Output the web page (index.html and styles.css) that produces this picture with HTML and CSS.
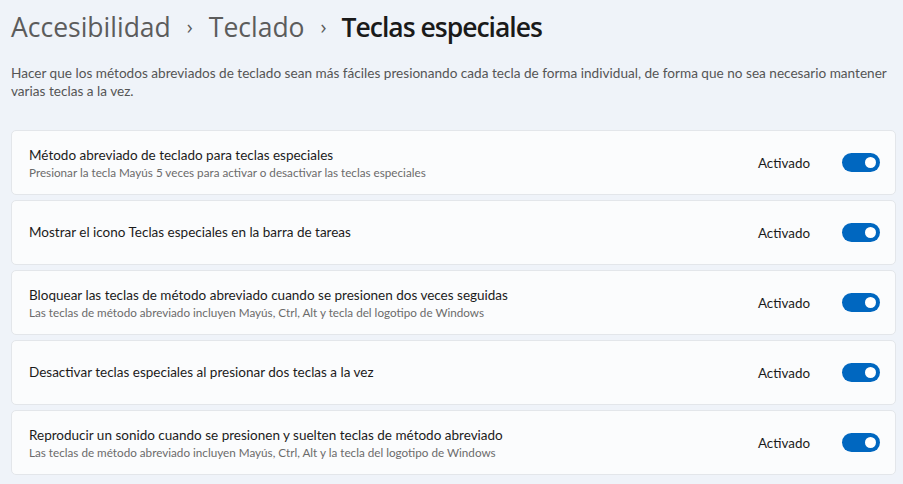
FILE: index.html
```html
<!DOCTYPE html>
<html lang="es">
<head>
    <meta charset="UTF-8">
    <title>Teclas especiales</title>
    <link rel="stylesheet" href="styles.css">
</head>
<body>

<div class="page">

    <!-- Breadcrumb -->
    <h1 class="crumbs">
        <span class="crumb">Accesibilidad</span>
        <span class="sep">&rsaquo;</span>
        <span class="crumb">Teclado</span>
        <span class="sep">&rsaquo;</span>
        <span class="crumb current">Teclas especiales</span>
    </h1>

    <p class="intro">Hacer que los métodos abreviados de teclado sean más fáciles presionando cada tecla de forma individual, de forma que no sea necesario mantener varias teclas a la vez.</p>

    <div class="list">
        <div class="card">
            <div class="text">
                <div class="title">Método abreviado de teclado para teclas especiales</div>
                <div class="sub">Presionar la tecla Mayús 5 veces para activar o desactivar las teclas especiales</div>
            </div>
            <span class="state">Activado</span>
            <span class="toggle"></span>
        </div>
        <div class="card">
            <div class="text">
                <div class="title">Mostrar el icono Teclas especiales en la barra de tareas</div>
            </div>
            <span class="state">Activado</span>
            <span class="toggle"></span>
        </div>
        <div class="card">
            <div class="text">
                <div class="title">Bloquear las teclas de método abreviado cuando se presionen dos veces seguidas</div>
                <div class="sub">Las teclas de método abreviado incluyen Mayús, Ctrl, Alt y tecla del logotipo de Windows</div>
            </div>
            <span class="state">Activado</span>
            <span class="toggle"></span>
        </div>
        <div class="card">
            <div class="text">
                <div class="title">Desactivar teclas especiales al presionar dos teclas a la vez</div>
            </div>
            <span class="state">Activado</span>
            <span class="toggle"></span>
        </div>
        <div class="card">
            <div class="text">
                <div class="title">Reproducir un sonido cuando se presionen y suelten teclas de método abreviado</div>
                <div class="sub">Las teclas de método abreviado incluyen Mayús, Ctrl, Alt y la tecla del logotipo de Windows</div>
            </div>
            <span class="state">Activado</span>
            <span class="toggle"></span>
        </div>
    </div>

</div>

</body>
</html>
```

FILE: styles.css
```css
body {
    margin: 0;
    background-color: #eff3f9;
    font-family: 'Lato', sans-serif;
    color: #1b1b1b;
}

.page {
    padding: 7px 7px 0 11px;
}

.crumbs {
    margin: 0;
    font-family: 'Open Sans', sans-serif;
    font-size: 26.5px;
    font-weight: 500;
    line-height: 40px;
    display: flex;
    align-items: center;
    gap: 16px;
}

.crumb {
    color: #5c5c5c;
}

.crumb.current {
    color: #1a1a1a;
    font-weight: 600;
    letter-spacing: -1px;
    margin-left: -1px;
}

.sep {
    color: #5c5c5c;
    font-size: 20px;
}

.intro {
    margin: 17px 0 30px;
    font-size: 13.6px;
    line-height: 18px;
    color: #555;
}

.list {
    display: flex;
    flex-direction: column;
    gap: 5px;
}

.card {
    height: 65px;
    box-sizing: border-box;
    background-color: #fbfcfd;
    border: 1px solid #e3e6ea;
    border-radius: 5px;
    display: flex;
    align-items: center;
    padding: 0 15px 0 17px;
}

.text {
    flex: 1;
}

.title {
    font-size: 13.5px;
    line-height: 19px;
    color: #1b1b1b;
}

.sub {
    font-size: 11.7px;
    line-height: 15px;
    color: #6b6b6b;
}

.state {
    font-size: 13.4px;
    color: #1b1b1b;
    margin-right: 32px;
}

.toggle {
    width: 38px;
    height: 19px;
    border-radius: 10px;
    background-color: #0067c0;
    position: relative;
}

.toggle::after {
    content: "";
    position: absolute;
    right: 4px;
    top: 4px;
    width: 11px;
    height: 11px;
    border-radius: 50%;
    background-color: #fff;
}
```
